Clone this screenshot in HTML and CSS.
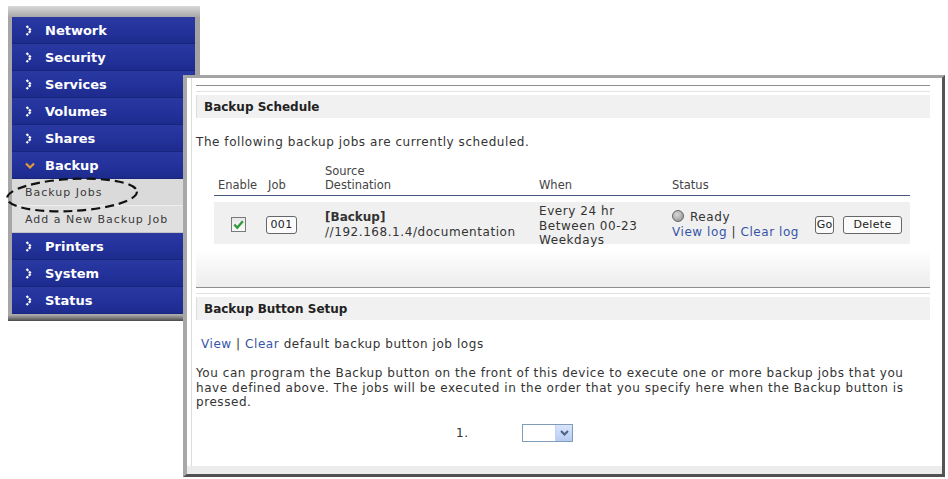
FILE: index.html
```html
<!DOCTYPE html>
<html lang="en">
<head>
    <meta charset="UTF-8">
    <title>Backup Jobs</title>
    <link rel="stylesheet" href="styles.css">
</head>
<body>
    <div class="nav">
        <div class="nav-top"></div>
        <div class="nav-item"><svg class="chev" viewBox="0 0 8 11"><polyline points="1.5,1 6,5.5 1.5,10"/></svg>Network</div>
        <div class="nav-item"><svg class="chev" viewBox="0 0 8 11"><polyline points="1.5,1 6,5.5 1.5,10"/></svg>Security</div>
        <div class="nav-item"><svg class="chev" viewBox="0 0 8 11"><polyline points="1.5,1 6,5.5 1.5,10"/></svg>Services</div>
        <div class="nav-item"><svg class="chev" viewBox="0 0 8 11"><polyline points="1.5,1 6,5.5 1.5,10"/></svg>Volumes</div>
        <div class="nav-item"><svg class="chev" viewBox="0 0 8 11"><polyline points="1.5,1 6,5.5 1.5,10"/></svg>Shares</div>
        <div class="nav-item open"><svg class="chev-down" viewBox="0 0 10 7"><polyline points="1,1.5 5,5.5 9,1.5"/></svg>Backup</div>
        <div class="nav-sub">Backup Jobs</div>
        <div class="nav-sub">Add a New Backup Job</div>
        <div class="nav-item"><svg class="chev" viewBox="0 0 8 11"><polyline points="1.5,1 6,5.5 1.5,10"/></svg>Printers</div>
        <div class="nav-item"><svg class="chev" viewBox="0 0 8 11"><polyline points="1.5,1 6,5.5 1.5,10"/></svg>System</div>
        <div class="nav-item"><svg class="chev" viewBox="0 0 8 11"><polyline points="1.5,1 6,5.5 1.5,10"/></svg>Status</div>
        <div class="nav-bottom"></div>
    </div>

    <svg class="mark" width="150" height="44" viewBox="0 0 150 44">
        <ellipse cx="72" cy="21" rx="65" ry="16" transform="rotate(-3 72 21)"/>
    </svg>

    <div class="panel">
        <div class="inner">
            <div class="rule"></div>
            <div class="sec-head">Backup Schedule</div>
            <p class="intro">The following backup jobs are currently scheduled.</p>

            <div class="jobs">
                <div class="jobs-head">
                    <div>Enable</div>
                    <div>Job</div>
                    <div>Source<br>Destination</div>
                    <div>When</div>
                    <div>Status</div>
                </div>
                <div class="job-row">
                    <div class="cell-check">
                        <span class="check"><svg viewBox="0 0 10 10"><polyline points="1.8,5 4,7.5 8.3,2.5"/></svg></span>
                    </div>
                    <div class="cell-job"><span class="btn btn-job">001</span></div>
                    <div class="cell-src"><strong>[Backup]</strong><br>//192.168.1.4/documentation</div>
                    <div class="cell-when">Every 24 hr<br>Between 00-23<br>Weekdays</div>
                    <div class="cell-status">
                        <div class="status-text">
                            <span class="radio"></span>Ready<br>
                            <a href="#">View log</a> | <a href="#">Clear log</a>
                        </div>
                        <span class="btn btn-go">Go</span>
                        <span class="btn btn-del">Delete</span>
                    </div>
                </div>
            </div>

            <div class="band"></div>
            <div class="rule"></div>
            <div class="sec-head">Backup Button Setup</div>
            <p class="links"><a href="#">View</a> | <a href="#">Clear</a> default backup button job logs</p>
            <p class="desc">You can program the Backup button on the front of this device to execute one or more backup jobs that you have defined above. The jobs will be executed in the order that you specify here when the Backup button is pressed.</p>
            <div class="order">
                <span class="order-num">1.</span>
                <div class="select">
                    <span class="sel-btn"><svg viewBox="0 0 9 6"><polyline points="1,1 4.5,4.5 8,1"/></svg></span>
                </div>
            </div>
            <div class="foot"></div>
        </div>
    </div>
</body>
</html>
```

FILE: styles.css
```css
body {
    margin: 0;
    padding: 6px 0 0 8px;
    background: #ffffff;
    font-family: 'DejaVu Sans', Verdana, sans-serif;
    color: #333;
}
a {
    color: #3654a6;
    text-decoration: none;
}

/* left menu */
.nav {
    width: 183px;
    border-left: 4px solid #a6a6a6;
    border-right: 5px solid #a2a2a2;
}
.nav-top {
    height: 11px;
    margin: 0 -5px 0 -4px;
    background: linear-gradient(#d8d8d8, #a8a8a8);
}
.nav-bottom {
    height: 7px;
    margin: 0 -5px 0 -4px;
    background: linear-gradient(#b4b4b4 0%, #8a8a8a 45%, #4a4a4a 100%);
}
.nav-item {
    box-sizing: border-box;
    height: 27px;
    display: flex;
    align-items: center;
    padding-left: 33px;
    position: relative;
    background: linear-gradient(#2a39a2 0%, #23329a 55%, #1d2b8e 100%);
    border-bottom: 1px solid #18257c;
    color: #fff;
    font-weight: bold;
    font-size: 13px;
}
.chev {
    position: absolute;
    left: 13px;
    top: 8px;
    width: 8px;
    height: 11px;
    fill: none;
    stroke: #fff;
    stroke-width: 2.2;
    stroke-dasharray: 2.5 1;
}
.chev-down {
    position: absolute;
    left: 13px;
    top: 10px;
    width: 10px;
    height: 7px;
    fill: none;
    stroke: #e39a3a;
    stroke-width: 2.2;
}
.nav-sub {
    box-sizing: border-box;
    height: 27px;
    display: flex;
    align-items: center;
    padding-left: 13px;
    background: #dadada;
    border-bottom: 1px solid #eeeeee;
    color: #3a3a3a;
    font-size: 11px;
    letter-spacing: 1px;
}
.nav-sub + .nav-sub {
    background: #dfdfdf;
    border-bottom: 1px solid #c4c4c4;
}

.mark {
    position: absolute;
    left: 0;
    top: 174px;
    fill: none;
    stroke: #111;
    stroke-width: 2.2;
    stroke-dasharray: 9 5;
}

/* main window */
.panel {
    position: absolute;
    left: 183px;
    top: 75px;
    width: 762px;
    height: 402px;
    box-sizing: border-box;
    background: #fff;
    border-top: 3px solid #a4a4a4;
    border-left: 4px solid #a8a8a8;
    border-right: 3px solid #555;
    border-bottom: 3px solid #505050;
}
.inner {
    margin-left: 4px;
    border-left: 1px solid #dcdcdc;
    padding: 7px 12px 0 4px;
    font-size: 12px;
    letter-spacing: 0.56px;
}
.rule {
    height: 5px;
    border-top: 1px solid #8e8e8e;
    border-bottom: 1px solid #e2e2e2;
    margin-bottom: 3px;
}
.sec-head {
    height: 23px;
    line-height: 24px;
    padding-left: 7px;
    background: #f1f1f1;
    border-left: 1px solid #dddddd;
    font-weight: bold;
    color: #222;
    letter-spacing: 0;
}
.intro {
    margin: 17px 0 0;
    line-height: 14px;
}

.jobs {
    margin: 15px 0 0 18px;
    width: 696px;
}
.jobs-head,
.job-row {
    display: grid;
    grid-template-columns: 50px 57px 214px 133px 1fr;
}
.jobs-head {
    border-bottom: 1px solid #48597f;
    padding-bottom: 3px;
    font-size: 11.5px;
    line-height: 14px;
    letter-spacing: 0;
    color: #444;
    align-items: end;
}
.jobs-head div {
    padding-left: 4px;
}
.job-row {
    margin-top: 6px;
    height: 42px;
    background: #f0f0f0;
    align-items: center;
}
.job-row strong {
    letter-spacing: 0;
}
.cell-check {
    padding-left: 17px;
}
.check {
    display: block;
    width: 13px;
    height: 13px;
    border: 1px solid #7a7a7a;
    background: linear-gradient(#e8e8e8, #fafafa);
}
.check svg {
    width: 13px;
    height: 13px;
    fill: none;
    stroke: #2f9a3a;
    stroke-width: 1.8;
}
.cell-job {
    padding-left: 2px;
}
.btn {
    display: inline-block;
    box-sizing: border-box;
    height: 18px;
    line-height: 16px;
    border: 1px solid #666;
    border-radius: 3px;
    background: #fbfbfb;
    font-size: 11px;
    letter-spacing: 0.3px;
    color: #222;
    text-align: center;
}
.btn-job {
    width: 31px;
}
.cell-src,
.cell-status {
    padding-left: 4px;
    line-height: 15px;
    align-self: start;
    padding-top: 8px;
}
.cell-when {
    padding-left: 4px;
    line-height: 14.5px;
    align-self: start;
    padding-top: 2px;
}
.cell-status {
    display: flex;
    align-items: center;
}
.status-text {
    flex: 0 0 143px;
}
.radio {
    display: inline-block;
    box-sizing: border-box;
    width: 12px;
    height: 12px;
    margin-right: 6px;
    vertical-align: -1px;
    border-radius: 50%;
    border: 1px solid #666;
    background: radial-gradient(circle at 40% 35%, #d8d8d8, #8c8c8c);
}
.btn-go {
    width: 19px;
    padding: 0;
    letter-spacing: 0;
    margin-right: 9px;
}
.btn-del {
    width: 59px;
}

.band {
    margin-top: 5px;
    height: 38px;
    background: linear-gradient(#ffffff, #ededed);
}
.links {
    margin: 17px 0 0;
    padding-left: 5px;
    line-height: 14px;
}
.desc {
    margin: 15px 0 0;
    line-height: 14.5px;
}
.order {
    margin-top: 14px;
    display: flex;
    align-items: center;
    padding-left: 260px;
    height: 18px;
}
.order-num {
    width: 66px;
}
.select {
    box-sizing: border-box;
    width: 51px;
    height: 18px;
    border: 1px solid #7f9db9;
    background: #fff;
    display: flex;
    justify-content: flex-end;
}
.sel-btn {
    width: 16px;
    height: 16px;
    background: linear-gradient(#dbe5fb, #b6cbf3);
    border-left: 1px solid #c3d3f5;
    display: flex;
    align-items: center;
    justify-content: center;
}
.sel-btn svg {
    width: 9px;
    height: 6px;
    fill: none;
    stroke: #4d6185;
    stroke-width: 2;
}
.foot {
    margin-top: 24px;
    height: 8px;
    margin-left: -9px;
    margin-right: -12px;
    background: #ececec;
}
```
